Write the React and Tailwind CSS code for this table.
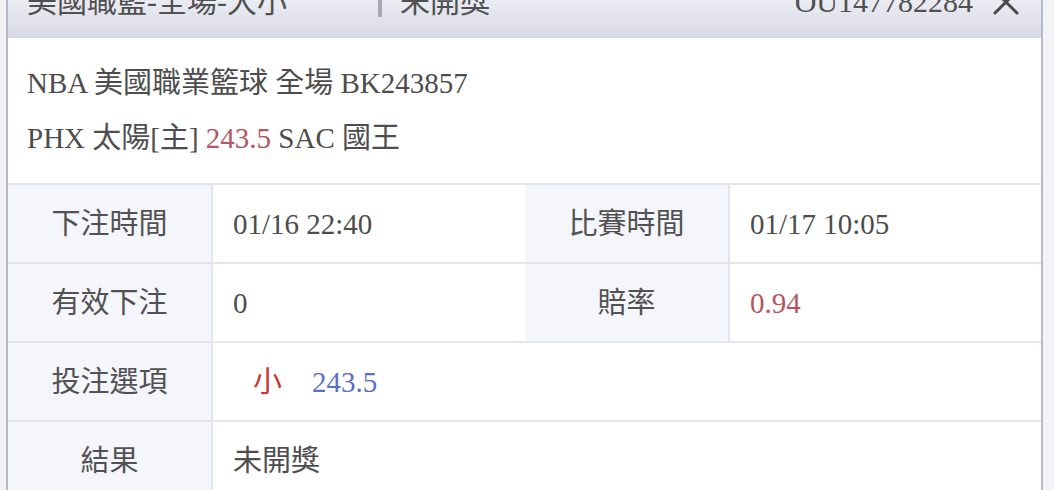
import React from "react";

const FONT = { fontFamily: '"Liberation Serif", "Noto Sans CJK TC", serif' };

function Row({ children }) {
  return (
    <div className="flex h-[79px] border-t-2 border-[#e3e4ee]">{children}</div>
  );
}

function Label({ children }) {
  return (
    <div className="flex w-[205px] shrink-0 items-center justify-center border-r-2 border-[#e3e4ee] bg-[#f5f6fb] pt-[3px] text-[#525252]">
      {children}
    </div>
  );
}

function Value({ children, wide }) {
  return (
    <div
      className={
        wide
          ? "flex flex-1 items-center pl-[20px] pt-[3px] text-[#4d4d4d]"
          : "flex w-[312px] shrink-0 items-center pl-[20px] pt-[3px] text-[#4d4d4d]"
      }
    >
      {children}
    </div>
  );
}

export default function App() {
  return (
    <div
      className="flex h-[490px] w-[1054px] overflow-hidden bg-[#f3f3f7] text-[29px]"
      style={FONT}
    >
      <div className="ml-[6px] flex w-[1037px] flex-col border-x-2 border-[#b7b9cb] bg-white">
        {/* header strip, cut at the top */}
        <div className="h-[38px] shrink-0 overflow-hidden bg-gradient-to-b from-[#ebecf3] to-[#d8d9e5] pl-[19px] pr-[22px] text-[30px] text-[#505050]">
          <div className="-mt-[13px] flex h-[30px] items-center leading-[30px]">
            <span className="w-[351px] shrink-0">美國職籃-全場-大小</span>
            <span className="h-[30px] w-[4px] shrink-0 bg-[#a6a7b2]" />
            <span className="ml-[18px]">未開獎</span>
            <span className="ml-auto">OU147782284</span>
            <svg
              className="ml-[20px]"
              width="26"
              height="26"
              viewBox="0 0 26 26"
              fill="none"
              stroke="#4a4a4a"
              strokeWidth="3"
              strokeLinecap="round"
            >
              <path d="M2 2 L24 24 M24 2 L2 24" />
            </svg>
          </div>
        </div>

        {/* match info */}
        <div className="shrink-0 px-[19px] pt-[18px] pb-[17px] leading-[55px] text-[#4d4d4d]">
          <div>NBA 美國職業籃球 全場 BK243857</div>
          <div>
            PHX 太陽[主] <span className="text-[#b5555f]">243.5</span> SAC 國王
          </div>
        </div>

        {/* detail table */}
        <div className="flex flex-col">
          <Row>
            <Label>下注時間</Label>
            <Value>01/16 22:40</Value>
            <Label>比賽時間</Label>
            <Value wide>01/17 10:05</Value>
          </Row>
          <Row>
            <Label>有效下注</Label>
            <Value>0</Value>
            <Label>賠率</Label>
            <Value wide>
              <span className="text-[#b5555f]">0.94</span>
            </Value>
          </Row>
          <Row>
            <Label>投注選項</Label>
            <Value wide>
              <span className="ml-[20px] text-[#c7352f]">小</span>
              <span className="ml-[30px] text-[#5a6fc6]">243.5</span>
            </Value>
          </Row>
          <Row>
            <Label>結果</Label>
            <Value wide>未開獎</Value>
          </Row>
        </div>
      </div>
    </div>
  );
}
